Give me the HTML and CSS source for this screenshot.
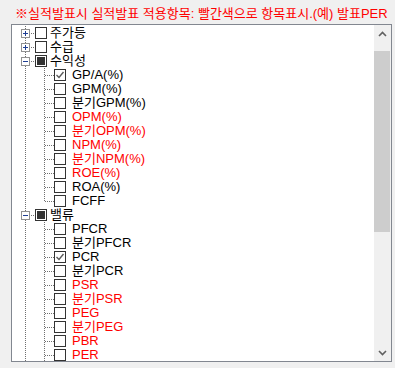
FILE: index.html
```html
<!DOCTYPE html>
<html lang="ko">
<head>
    <meta charset="UTF-8">
    <meta name="viewport" content="width=device-width, initial-scale=1.0">
    <title>항목 선택</title>
    <link rel="stylesheet" href="styles.css">
</head>
<body>

    <p class="notice">※실적발표시 실적발표 적용항목: 빨간색으로 항목표시.(예) 발표PER</p>

    <!-- Arbre des items avec cases a cocher -->
    <div class="panel">
        <div class="tree">
            <ul class="root">
                <li>
                    <div class="row"><i class="exp plus"></i><i class="hdots"></i><i class="chk"></i><span class="txt">주가등</span></div>
                </li>
                <li>
                    <div class="row"><i class="exp plus"></i><i class="hdots"></i><i class="chk"></i><span class="txt">수급</span></div>
                </li>
                <li>
                    <div class="row"><i class="exp minus"></i><i class="hdots"></i><i class="chk part"></i><span class="txt">수익성</span></div>
                    <ul class="children">
                        <li class="row"><i class="conn"></i><i class="chk on"><svg viewBox="0 0 10 10" width="10" height="10"><polyline points="1.5,5 4,7.5 8.5,2" fill="none" stroke="#5a5a5a" stroke-width="1.4"/></svg></i><span class="txt">GP/A(%)</span></li>
                        <li class="row"><i class="conn"></i><i class="chk"></i><span class="txt">GPM(%)</span></li>
                        <li class="row"><i class="conn"></i><i class="chk"></i><span class="txt">분기GPM(%)</span></li>
                        <li class="row"><i class="conn"></i><i class="chk"></i><span class="txt red">OPM(%)</span></li>
                        <li class="row"><i class="conn"></i><i class="chk"></i><span class="txt red">분기OPM(%)</span></li>
                        <li class="row"><i class="conn"></i><i class="chk"></i><span class="txt red">NPM(%)</span></li>
                        <li class="row"><i class="conn"></i><i class="chk"></i><span class="txt red">분기NPM(%)</span></li>
                        <li class="row"><i class="conn"></i><i class="chk"></i><span class="txt red">ROE(%)</span></li>
                        <li class="row"><i class="conn"></i><i class="chk"></i><span class="txt">ROA(%)</span></li>
                        <li class="row"><i class="conn"></i><i class="chk"></i><span class="txt">FCFF</span></li>
                    </ul>
                </li>
                <li>
                    <div class="row"><i class="exp minus"></i><i class="hdots"></i><i class="chk part"></i><span class="txt">밸류</span></div>
                    <ul class="children more">
                        <li class="row"><i class="conn"></i><i class="chk"></i><span class="txt">PFCR</span></li>
                        <li class="row"><i class="conn"></i><i class="chk"></i><span class="txt">분기PFCR</span></li>
                        <li class="row"><i class="conn"></i><i class="chk on"><svg viewBox="0 0 10 10" width="10" height="10"><polyline points="1.5,5 4,7.5 8.5,2" fill="none" stroke="#5a5a5a" stroke-width="1.4"/></svg></i><span class="txt">PCR</span></li>
                        <li class="row"><i class="conn"></i><i class="chk"></i><span class="txt">분기PCR</span></li>
                        <li class="row"><i class="conn"></i><i class="chk"></i><span class="txt red">PSR</span></li>
                        <li class="row"><i class="conn"></i><i class="chk"></i><span class="txt red">분기PSR</span></li>
                        <li class="row"><i class="conn"></i><i class="chk"></i><span class="txt red">PEG</span></li>
                        <li class="row"><i class="conn"></i><i class="chk"></i><span class="txt red">분기PEG</span></li>
                        <li class="row"><i class="conn"></i><i class="chk"></i><span class="txt red">PBR</span></li>
                        <li class="row"><i class="conn"></i><i class="chk"></i><span class="txt red">PER</span></li>
                    </ul>
                </li>
            </ul>
        </div>

        <!-- Barre de defilement -->
        <div class="scrollbar">
            <div class="sb-btn">
                <svg viewBox="0 0 9 6" width="9" height="6"><polyline points="1,5 4.5,1.5 8,5" fill="none" stroke="#606060" stroke-width="1.6"/></svg>
            </div>
            <div class="sb-track"><div class="sb-thumb"></div></div>
            <div class="sb-btn">
                <svg viewBox="0 0 9 6" width="9" height="6"><polyline points="1,1 4.5,4.5 8,1" fill="none" stroke="#606060" stroke-width="1.6"/></svg>
            </div>
        </div>
    </div>

</body>
</html>
```

FILE: styles.css
```css
body {
    margin: 0;
    padding: 0 3px 0 11px;
    font-family: "Liberation Sans", "Noto Sans CJK KR", sans-serif;
    font-size: 13px;
    background-color: #f0f0f0;
}

.notice {
    margin: 0;
    padding: 7px 0 0 4px;
    line-height: 14px;
    color: #ff0000;
    white-space: nowrap;
}

.panel {
    display: flex;
    margin-top: 3px;
    height: 338px;
    box-sizing: border-box;
    background: #fff;
    border: 1px solid #828790;
}

.tree {
    flex: 1;
    overflow: hidden;
    padding-top: 1px;
}

ul {
    margin: 0;
    padding: 0;
    list-style: none;
}

.root,
.children {
    background-image: repeating-linear-gradient(to bottom, #707070 0 1px, transparent 1px 2px);
    background-size: 1px 100%;
    background-repeat: no-repeat;
}

.root {
    margin-left: 13px;
}

.children {
    margin-left: 19px;
    background-size: 1px calc(100% - 7px);
}

.children.more {
    background-size: 1px 100%;
}

.row {
    display: flex;
    align-items: center;
    height: 14px;
    line-height: 14px;
    white-space: nowrap;
}

i {
    display: block;
    flex: none;
}

.exp {
    position: relative;
    width: 9px;
    height: 9px;
    margin-left: -4px;
    box-sizing: border-box;
    background: #fff;
    border: 1px solid #919191;
}

.exp::before,
.exp::after {
    content: "";
    position: absolute;
    background: #1f3f94;
}

.exp::before {
    left: 1px;
    top: 3px;
    width: 5px;
    height: 1px;
}

.plus::after {
    left: 3px;
    top: 1px;
    width: 1px;
    height: 5px;
}

.hdots {
    width: 5px;
    height: 1px;
    background-image: repeating-linear-gradient(to right, transparent 0 1px, #707070 1px 2px);
}

.conn {
    width: 10px;
    height: 1px;
    background-image: repeating-linear-gradient(to right, transparent 0 1px, #707070 1px 2px);
}

.chk {
    display: flex;
    align-items: center;
    justify-content: center;
    width: 12px;
    height: 12px;
    box-sizing: border-box;
    background: #fff;
    border: 1px solid #333;
}

.chk.part::after {
    content: "";
    width: 8px;
    height: 8px;
    background: #333;
}

.txt {
    margin-left: 3px;
    height: 14px;
    color: #000;
}

.children .txt {
    margin-left: 6px;
}

.red {
    color: #ff0000;
}

.scrollbar {
    display: flex;
    flex-direction: column;
    width: 17px;
    background: #f0f0f0;
}

.sb-btn {
    display: flex;
    align-items: center;
    justify-content: center;
    height: 17px;
}

.sb-track {
    flex: 1;
}

.sb-thumb {
    margin: 9px 1px 0 0;
    height: 181px;
    background: #cdcdcd;
}
```
